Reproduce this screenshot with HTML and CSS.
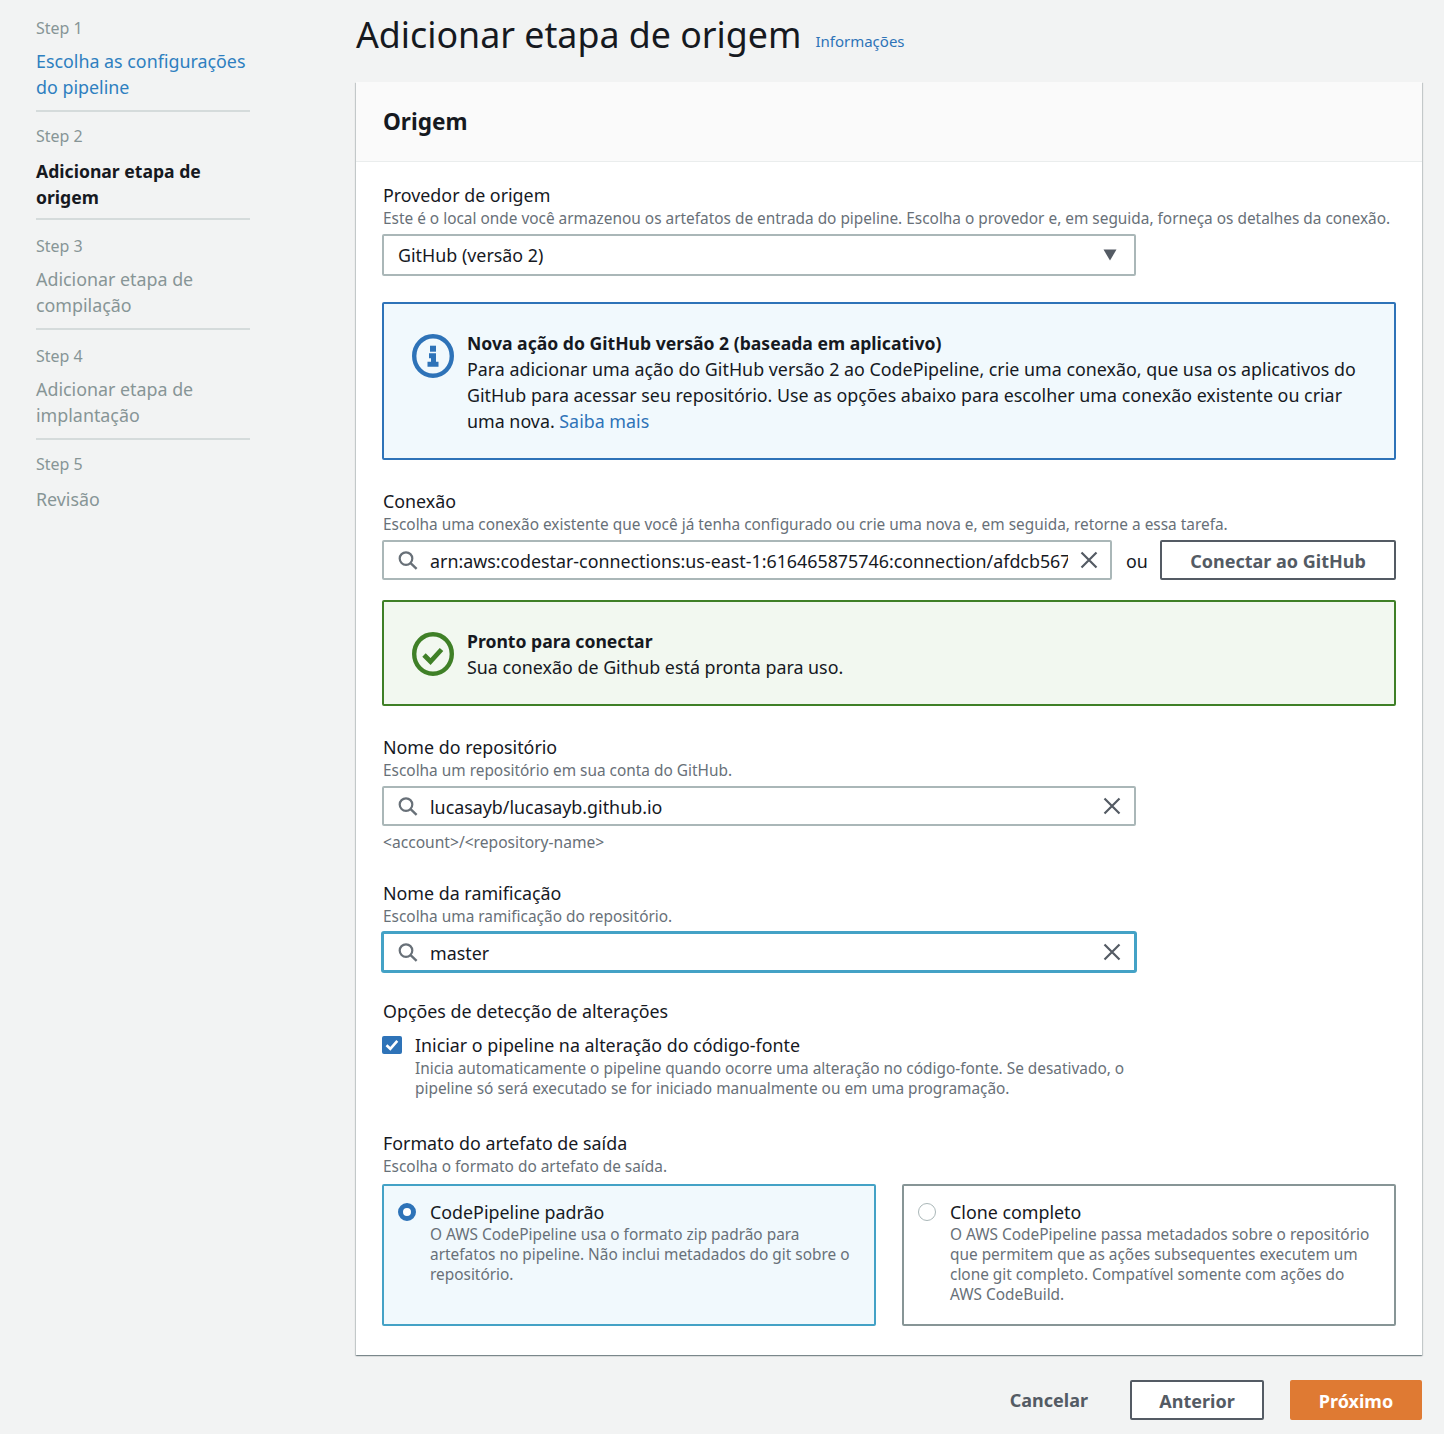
FILE: index.html
```html
<!DOCTYPE html>
<html lang="pt-br">
<head>
    <meta charset="UTF-8">
    <meta name="viewport" content="width=device-width, initial-scale=1.0">
    <title>Adicionar etapa de origem</title>
    <link rel="stylesheet" href="styles.css">
</head>
<body>
    <nav class="steps">
        <div class="step">
            <div class="step-num">Step 1</div>
            <a class="step-title step-link" href="#">Escolha as configurações do pipeline</a>
        </div>
        <div class="step step-tight">
            <div class="step-num">Step 2</div>
            <div class="step-title step-active">Adicionar etapa de origem</div>
        </div>
        <div class="step">
            <div class="step-num">Step 3</div>
            <div class="step-title">Adicionar etapa de compilação</div>
        </div>
        <div class="step">
            <div class="step-num">Step 4</div>
            <div class="step-title">Adicionar etapa de implantação</div>
        </div>
        <div class="step step-tight step-last">
            <div class="step-num">Step 5</div>
            <div class="step-title">Revisão</div>
        </div>
    </nav>

    <main class="content">
        <div class="page-head">
            <h1>Adicionar etapa de origem</h1>
            <a class="info-link" href="#">Informações</a>
        </div>

        <section class="card">
            <h2 class="card-head">Origem</h2>
            <div class="card-body">
                <div class="label">Provedor de origem</div>
                <div class="desc">Este é o local onde você armazenou os artefatos de entrada do pipeline. Escolha o provedor e, em seguida, forneça os detalhes da conexão.</div>
                <div class="box box-select">
                    <span class="box-text">GitHub (versão 2)</span>
                    <svg class="caret" width="14" height="12" viewBox="0 0 14 12"><path d="M0.5 0.5h13L7 11.5z" fill="#545b64"/></svg>
                </div>

                <div class="alert alert-info">
                    <svg class="alert-icon" width="42" height="44" viewBox="0 0 42 44">
                        <ellipse cx="21" cy="22" rx="18.8" ry="19.8" fill="none" stroke="#2e73b8" stroke-width="4.4"/>
                        <rect x="18" y="11.7" width="6" height="6" fill="#2e73b8"/>
                        <path d="M17 19.3h7v8.4h2.5v5h-11v-5h3.5v-3.4h-2z" fill="#2e73b8"/>
                    </svg>
                    <div class="alert-text">
                        <strong>Nova ação do GitHub versão 2 (baseada em aplicativo)</strong><br>
                        Para adicionar uma ação do GitHub versão 2 ao CodePipeline, crie uma conexão, que usa os aplicativos do GitHub para acessar seu repositório. Use as opções abaixo para escolher uma conexão existente ou criar uma nova. <a href="#">Saiba mais</a>
                    </div>
                </div>

                <div class="label label-gap">Conexão</div>
                <div class="desc">Escolha uma conexão existente que você já tenha configurado ou crie uma nova e, em seguida, retorne a essa tarefa.</div>
                <div class="conn-row">
                    <div class="box box-conn">
                        <svg class="search" width="20" height="19" viewBox="0 0 20 19"><circle cx="8" cy="7.6" r="6.3" fill="none" stroke="#687078" stroke-width="2.2"/><path d="M12.6 12.2l6 5.6" stroke="#687078" stroke-width="2.4" fill="none"/></svg>
                        <span class="box-text box-clip">arn:aws:codestar-connections:us-east-1:616465875746:connection/afdcb5672e-4c1d-9a</span>
                        <svg class="clear" width="18" height="18" viewBox="0 0 18 18"><path d="M1.5 1.5l15 15M16.5 1.5l-15 15" stroke="#545b64" stroke-width="2.2" fill="none"/></svg>
                    </div>
                    <span class="conn-or">ou</span>
                    <a class="btn btn-conn" href="#">Conectar ao GitHub</a>
                </div>

                <div class="alert alert-ok">
                    <svg class="alert-icon" width="42" height="44" viewBox="0 0 42 44">
                        <ellipse cx="21" cy="22" rx="18.8" ry="19.8" fill="none" stroke="#3f8027" stroke-width="4.4"/>
                        <path d="M12 23l6.5 6.5L29.5 17.5" fill="none" stroke="#3f8027" stroke-width="4.8"/>
                    </svg>
                    <div class="alert-text">
                        <strong>Pronto para conectar</strong><br>
                        Sua conexão de Github está pronta para uso.
                    </div>
                </div>

                <div class="label label-gap">Nome do repositório</div>
                <div class="desc">Escolha um repositório em sua conta do GitHub.</div>
                <div class="box box-field">
                    <svg class="search" width="20" height="19" viewBox="0 0 20 19"><circle cx="8" cy="7.6" r="6.3" fill="none" stroke="#687078" stroke-width="2.2"/><path d="M12.6 12.2l6 5.6" stroke="#687078" stroke-width="2.4" fill="none"/></svg>
                    <span class="box-text box-clip">lucasayb/lucasayb.github.io</span>
                    <svg class="clear" width="18" height="18" viewBox="0 0 18 18"><path d="M1.5 1.5l15 15M16.5 1.5l-15 15" stroke="#545b64" stroke-width="2.2" fill="none"/></svg>
                </div>
                <div class="hint">&lt;account&gt;/&lt;repository-name&gt;</div>

                <div class="label label-gap">Nome da ramificação</div>
                <div class="desc">Escolha uma ramificação do repositório.</div>
                <div class="box box-field box-focus">
                    <svg class="search" width="20" height="19" viewBox="0 0 20 19"><circle cx="8" cy="7.6" r="6.3" fill="none" stroke="#687078" stroke-width="2.2"/><path d="M12.6 12.2l6 5.6" stroke="#687078" stroke-width="2.4" fill="none"/></svg>
                    <span class="box-text box-clip">master</span>
                    <svg class="clear" width="18" height="18" viewBox="0 0 18 18"><path d="M1.5 1.5l15 15M16.5 1.5l-15 15" stroke="#545b64" stroke-width="2.2" fill="none"/></svg>
                </div>

                <div class="label label-options">Opções de detecção de alterações</div>
                <div class="check-row">
                    <span class="checkbox">
                        <svg width="14" height="12" viewBox="0 0 14 12"><path d="M1.5 6.2l3.8 3.6 7-8" fill="none" stroke="#fff" stroke-width="2.6"/></svg>
                    </span>
                    <div class="check-text">
                        <div class="label">Iniciar o pipeline na alteração do código-fonte</div>
                        <div class="desc">Inicia automaticamente o pipeline quando ocorre uma alteração no código-fonte. Se desativado, o pipeline só será executado se for iniciado manualmente ou em uma programação.</div>
                    </div>
                </div>

                <div class="label label-format">Formato do artefato de saída</div>
                <div class="desc">Escolha o formato do artefato de saída.</div>
                <div class="tiles">
                    <div class="tile tile-on">
                        <span class="radio radio-on"></span>
                        <div>
                            <div class="label">CodePipeline padrão</div>
                            <div class="desc">O AWS CodePipeline usa o formato zip padrão para artefatos no pipeline. Não inclui metadados do git sobre o repositório.</div>
                        </div>
                    </div>
                    <div class="tile">
                        <span class="radio"></span>
                        <div>
                            <div class="label">Clone completo</div>
                            <div class="desc">O AWS CodePipeline passa metadados sobre o repositório que permitem que as ações subsequentes executem um clone git completo. Compatível somente com ações do AWS CodeBuild.</div>
                        </div>
                    </div>
                </div>
            </div>
        </section>

        <div class="actions">
            <a class="btn-text" href="#">Cancelar</a>
            <a class="btn btn-prev" href="#">Anterior</a>
            <a class="btn btn-next" href="#">Próximo</a>
        </div>
    </main>
</body>
</html>
```

FILE: styles.css
```css
* {
    box-sizing: border-box;
}

body {
    margin: 0;
    background-color: #f2f3f3;
    color: #16191f;
    font-family: 'Noto Sans', sans-serif;
    font-size: 17.85px;
    line-height: 26px;
    display: flex;
    align-items: flex-start;
}

a {
    text-decoration: none;
    color: #2e73b8;
}

strong {
    font-size: 17.6px;
}

/* barra lateral */
.steps {
    width: 214px;
    margin-left: 36px;
    margin-right: 106px;
    padding-top: 2px;
    flex-shrink: 0;
}

.step {
    padding: 13px 0 10px;
    border-bottom: 2px solid #d5dbdb;
}

.step-tight {
    padding: 11px 0 8px;
}

.step-tight .step-num {
    margin-bottom: 9px;
}

.step-last {
    border-bottom: 0;
}

.step-num {
    font-size: 16px;
    color: #879596;
    margin-bottom: 7px;
}

.step-title {
    color: #879596;
    display: block;
}

.step-link {
    color: #2e7fc0;
}

.step-active {
    color: #16191f;
    font-size: 17.6px;
    font-weight: 700;
}

/* conteudo */
.content {
    width: 1066px;
    padding-bottom: 14px;
}

.page-head {
    display: flex;
    align-items: flex-start;
    height: 82px;
    padding-top: 12px;
}

h1 {
    margin: 0 14px 0 0;
    font-size: 35.75px;
    line-height: 44px;
    font-weight: 400;
}

.info-link {
    margin-top: 16px;
    font-size: 15px;
}

.card {
    background-color: #fff;
    box-shadow: 0 1px 1px 0 rgba(0, 28, 36, 0.3), 1px 1px 1px 0 rgba(0, 28, 36, 0.15), -1px 1px 1px 0 rgba(0, 28, 36, 0.15);
}

.card-head {
    margin: 0;
    height: 80px;
    padding: 0 27px;
    font-size: 22.6px;
    line-height: 79px;
    font-weight: 700;
    background-color: #fafafa;
    border-bottom: 1px solid #eaeded;
}

.card-body {
    padding: 20px 26px 29px;
}

.label,
.desc,
.hint {
    padding-left: 1px;
}

.label-gap {
    margin-top: 28px;
}

.label-options {
    margin-top: 26px;
}

.label-format {
    margin-top: 32px;
}

.desc,
.hint {
    font-size: 15.4px;
    line-height: 20px;
    color: #687078;
}

.desc {
    padding-top: 1px;
    margin-bottom: -1px;
}

.hint {
    margin-top: 6px;
    font-size: 15.6px;
}

.box {
    display: flex;
    align-items: center;
    height: 40px;
    margin-top: 6px;
    padding: 0 13px 0 14px;
    background-color: #fff;
    border: 2px solid #aab7b8;
    border-radius: 2px;
}

.box-select {
    width: 754px;
    height: 42px;
    justify-content: space-between;
    padding-right: 17px;
}

.box-field {
    width: 754px;
}

.box-focus {
    border-color: #44a2c6;
    box-shadow: 0 0 0 1px #44a2c6;
}

.box-text {
    white-space: nowrap;
}

.box-clip {
    flex: 1;
    overflow: hidden;
    margin: 0 12px;
    padding-top: 2px;
}

.search,
.clear {
    flex-shrink: 0;
}

.conn-row {
    display: flex;
    align-items: flex-end;
}

.box-conn {
    width: 730px;
    padding-right: 12px;
}

.conn-or {
    width: 48px;
    height: 40px;
    padding-left: 2px;
    line-height: 42px;
    text-align: center;
}

.btn {
    display: block;
    height: 40px;
    text-align: center;
    font-size: 18px;
    font-weight: 700;
    line-height: 38px;
    color: #545b64;
    background-color: #fff;
    border: 2px solid #545b64;
    border-radius: 2px;
}

.btn-conn {
    width: 236px;
}

.alert {
    display: flex;
    align-items: flex-start;
    padding: 26px 28px 24px;
    border: 2px solid;
    border-radius: 2px;
}

.alert-info {
    margin-top: 26px;
    border-color: #2e73b8;
    background-color: #f1f9fd;
}

.alert-ok {
    margin-top: 20px;
    border-color: #3f8027;
    background-color: #f2f8f0;
}

.alert-icon {
    flex-shrink: 0;
    margin: 4px 13px 0 0;
}

.check-row {
    display: flex;
    margin-top: 8px;
    width: 754px;
}

.checkbox {
    width: 20px;
    height: 18px;
    margin: 4px 12px 0 0;
    flex-shrink: 0;
    display: flex;
    justify-content: center;
    align-items: center;
    background-color: #2e73b8;
    border-radius: 2px;
}

.tiles {
    display: grid;
    grid-template-columns: 494px 494px;
    gap: 26px;
    margin-top: 8px;
}

.tile {
    display: flex;
    height: 142px;
    padding: 13px 22px 0 14px;
    border: 2px solid #879596;
    border-radius: 2px;
}

.tile .desc {
    padding-top: 0;
}

.tile-on {
    border-color: #44a2c6;
    background-color: #f1f9fd;
}

.radio {
    width: 18px;
    height: 18px;
    margin: 4px 13px 0 0;
    flex-shrink: 0;
    border: 1px solid #aab7b8;
    border-radius: 50%;
    background-color: #fff;
}

.radio-on {
    border: 5px solid #2e73b8;
}

.actions {
    display: flex;
    justify-content: flex-end;
    align-items: center;
    margin-top: 25px;
}

.btn-text {
    font-size: 18px;
    font-weight: 700;
    color: #545b64;
    margin-right: 42px;
}

.btn-prev {
    width: 134px;
    margin-right: 26px;
}

.btn-next {
    width: 132px;
    color: #fff;
    background-color: #df7a33;
    border-color: #df7a33;
}
```
